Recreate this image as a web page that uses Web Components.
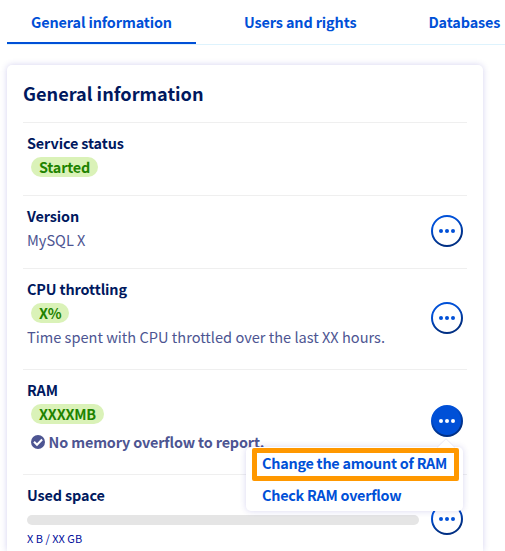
<!DOCTYPE html>
<html lang="en"><head><meta charset="utf-8"><title>General information</title>
<style>
html{background:#fff}
body{margin:0;width:505px;height:551px;overflow:hidden;font-family:"Noto Sans CJK SC","Open Sans",sans-serif;font-size:14.4px;line-height:24px;color:#4d5592}
</style></head><body>
<service-page></service-page>
<script>
const define=(name,html,setup)=>customElements.define(name,class extends HTMLElement{
  constructor(){super();this.attachShadow({mode:'open'}).innerHTML=html;}
  connectedCallback(){if(setup)setup(this);}
});
define('tab-item',`<style>:host{display:block;flex:none;box-sizing:border-box;height:44px;padding:10px 24px 0;white-space:nowrap;font-weight:700;letter-spacing:-.12px;color:#0050d7}
:host([active]){border-bottom:2px solid #0050d7}</style><slot></slot>`);
define('tab-bar',`<style>:host{display:flex;height:44px;width:498px;margin-left:7px;box-shadow:0 1px 0 #def3fd}</style><slot></slot>`);
define('status-badge',`<style>:host{display:block;width:fit-content;box-sizing:border-box;height:20px;line-height:20px;margin:2px 0 2px 4px;padding:0 8px;border-radius:10px;background:#daf2b8;color:#1f8300;font-weight:700;letter-spacing:-.2px;white-space:nowrap}</style><slot></slot>`);
define('more-button',`<style>:host{display:block;flex:none;width:32px;height:32px;position:relative}svg{display:block}</style>
<svg width="32" height="32" viewBox="0 0 32 32"><defs><linearGradient id="g" x1=".3" y1="0" x2=".7" y2="1"><stop offset=".25" stop-color="#0050d7"/><stop offset=".8" stop-color="#002f84"/></linearGradient></defs>
<circle class="ring" cx="16" cy="16" r="15" fill="#fff" stroke="url(#g)" stroke-width="2"/>
<g class="dots" fill="#0050d7"><circle cx="10" cy="16" r="2"/><circle cx="16" cy="16" r="2"/><circle cx="22" cy="16" r="2"/></g></svg><slot></slot>`,el=>{
  if(el.hasAttribute('open')){el.shadowRoot.querySelector('.ring').setAttribute('fill','#0050d7');el.shadowRoot.querySelector('.dots').setAttribute('fill','#fff');}
});
define('menu-item',`<style>:host{display:block;box-sizing:border-box;height:32px;padding:4px 16px;color:#0050d7;font-weight:700;letter-spacing:-.25px;white-space:nowrap;position:relative}
:host([marked])::after{content:"";position:absolute;left:6px;right:4px;top:1px;height:23px;border:5px solid #ff9800;border-radius:2px}</style><slot></slot>`);
define('action-menu',`<style>:host{display:block;position:absolute;z-index:2;top:42px;right:0;width:217px;height:64px;background:#fff;border-radius:5px;box-shadow:0 0 6px rgba(60,50,180,.2)}
svg{position:absolute;right:7px;top:-9px}</style><svg width="20" height="10"><path d="M1 10 10 .7 19 10Z" fill="#fff"/><path d="M1 9.5 10 .7 19 9.5" fill="none" stroke="#e3e2f4" stroke-width=".8"/></svg><slot></slot>`);
define('info-row',`<style>:host{display:flex;box-sizing:border-box;border-top:1px solid #efefef;padding:8px 4px 0;height:var(--h)}
.body{flex:1;min-width:0;white-space:nowrap}.label{color:#00185e;font-weight:700;letter-spacing:-.12px}.action{margin-top:var(--action)}</style>
<div class="body"><div class="label"><slot name="label"></slot></div><slot></slot></div><div class="action"><slot name="action"></slot></div>`);
define('check-note',`<style>:host{display:flex;align-items:center;margin:6px 0 0 4px;font-weight:700;letter-spacing:-.15px}svg{margin-right:3.6px}</style>
<svg width="14" height="14" viewBox="0 0 14 14"><circle cx="7" cy="7" r="7" fill="#4d5592"/><path d="m3 6.7 3 3 5.1-5.1" fill="none" stroke="#fff" stroke-width="2.1"/></svg><span><slot></slot></span>`);
define('usage-bar',`<style>:host{display:block}.bar{width:392px;height:10px;border-radius:5px;background:#e5e5e5;margin-top:8px}.cap{font-size:11px;line-height:18px;margin-top:4px;color:#000e9c}</style><div class="bar"></div><div class="cap"><slot></slot></div>`);
define('info-card',`<style>:host{display:block;box-sizing:border-box;margin:21px 0 0 7px;width:476px;height:486px;padding:0 16px;background:#fff;border-radius:5px 5px 0 0;box-shadow:0 0 6px rgba(60,50,180,.22)}
h2{margin:0;height:57px;box-sizing:border-box;padding-top:13px;line-height:30px;font-size:18.15px;font-weight:700;color:#00185e}</style><h2><slot name="title"></slot></h2><slot></slot>`);
define('service-page',`<style>:host{display:block}.t2{padding-left:48px}.t3{padding-left:48px}.regular{font-size:14.58px}</style>
<tab-bar><tab-item active class="t1">General information</tab-item><tab-item class="t2">Users and rights</tab-item><tab-item class="t3">Databases</tab-item></tab-bar>
<info-card><span slot="title">General information</span>
<info-row style="--h:73px"><span slot="label">Service status</span><status-badge>Started</status-badge></info-row>
<info-row style="--h:73px;--action:11px"><span slot="label">Version</span><div class="regular">MySQL X</div><more-button slot="action"></more-button></info-row>
<info-row style="--h:101px;--action:25px"><span slot="label">CPU throttling</span><status-badge>X%</status-badge><div class="regular">Time spent with CPU throttled over the last XX hours.</div><more-button slot="action"></more-button></info-row>
<info-row style="--h:105px;--action:27px"><span slot="label">RAM</span><status-badge>XXXXMB</status-badge><check-note>No memory overflow to report.</check-note>
<more-button slot="action" open><action-menu><menu-item marked>Change the amount of RAM</menu-item><menu-item>Check RAM overflow</menu-item></action-menu></more-button></info-row>
<info-row style="--h:76px;--action:20px"><span slot="label">Used space</span><usage-bar>X B / XX GB</usage-bar><more-button slot="action"></more-button></info-row>
</info-card>`);
</script></body></html>
